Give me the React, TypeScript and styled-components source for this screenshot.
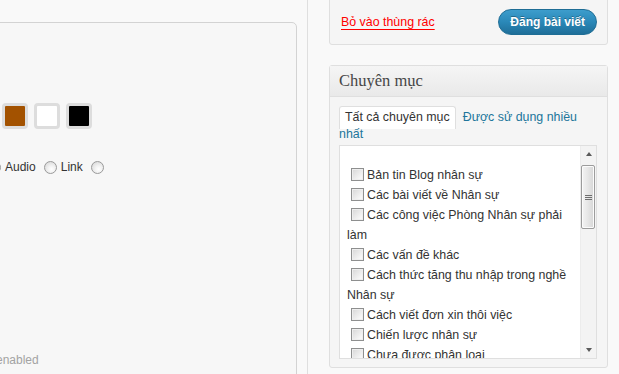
import styled, { createGlobalStyle } from 'styled-components'

const GlobalStyle = createGlobalStyle`
  html, body, #root {
    margin: 0;
    padding: 0;
    height: 100%;
  }
  body {
    background: #f9f9f9;
    font-family: "Liberation Sans", Arial, sans-serif;
    color: #333;
    overflow: hidden;
  }
`

const swatches = ['#a35200', '#ffffff', '#000000']

const categories = [
  'Bản tin Blog nhân sự',
  'Các bài viết về Nhân sự',
  'Các công việc Phòng Nhân sự phải làm',
  'Các vấn đề khác',
  'Cách thức tăng thu nhập trong nghề Nhân sự',
  'Cách viết đơn xin thôi việc',
  'Chiến lược nhân sự',
  'Chưa được phân loại',
]

const App = () => {
  return <>
    <GlobalStyle />
    <Page>
      <MainColumn>
        <EditorPanel>
          <SwatchRow>
            {swatches.map(c => <Swatch key={c} $color={c} />)}
          </SwatchRow>

          <FormatRow>
            <Radio type="radio" name="format" />
            <FormatLabel>Audio</FormatLabel>
            <Radio type="radio" name="format" />
            <FormatLabel>Link</FormatLabel>
            <Radio type="radio" name="format" />
          </FormatRow>

          <StatusNote>enabled</StatusNote>
        </EditorPanel>
      </MainColumn>

      <SideColumn>
        <PublishBox>
          <TrashLink href="#">Bỏ vào thùng rác</TrashLink>
          <PublishButton>Đăng bài viết</PublishButton>
        </PublishBox>

        <MetaBox>
          <BoxTitle>Chuyên mục</BoxTitle>
          <BoxInside>
            <TabLine>
              <Tab $active>Tất cả chuyên mục</Tab>
              <Tab>Được sử dụng nhiều nhất</Tab>
            </TabLine>

            <TabsPanel>
              <CheckList>
                {categories.map(name => (
                  <li key={name}>
                    <label>
                      <Check type="checkbox" />
                      {name}
                    </label>
                  </li>
                ))}
              </CheckList>

              <ScrollTrack>
                <ScrollButton><Arrow $dir="up" /></ScrollButton>
                <ScrollThumb><Grip /></ScrollThumb>
                <ScrollButton><Arrow $dir="down" /></ScrollButton>
              </ScrollTrack>
            </TabsPanel>
          </BoxInside>
        </MetaBox>
      </SideColumn>
    </Page>
  </>
}

const Page = styled.div`
  display: flex;
  height: 374px;
  overflow: hidden;
`

const MainColumn = styled.div`
  width: 308px;
  flex-shrink: 0;
  box-sizing: border-box;
  padding-top: 22px;
  border-right: 1px solid #dfdfdf;
`

const EditorPanel = styled.div`
  height: 380px;
  margin: 0 10px 0 -40px;
  padding-left: 40px;
  box-sizing: border-box;
  border: 1px solid #d3d3d3;
  border-radius: 5px;
  background: #f7f7f7;
  font-size: 12px;
`

const SwatchRow = styled.div`
  display: flex;
  gap: 6px;
  margin: 80px 0 0 1px;
`

const Swatch = styled.span<{ $color: string }>`
  width: 26px;
  height: 26px;
  box-sizing: border-box;
  border: 3px solid #dddddd;
  border-radius: 4px;
  background: ${p => p.$color};
`

const FormatRow = styled.div`
  display: flex;
  align-items: center;
  height: 16px;
  margin: 30px 0 0 -13px;
  line-height: 16px;
  color: #333;
`

const Radio = styled.input`
  appearance: none;
  width: 13px;
  height: 13px;
  margin: 0 4px 0 8px;
  box-sizing: border-box;
  border: 1px solid #9a9a9a;
  border-radius: 50%;
  background: radial-gradient(circle at 60% 65%, #ffffff 0, #f2f2f2 35%, #d2d2d2 100%);

  &:first-child {
    margin-left: 0;
  }
`

const FormatLabel = styled.span`
  white-space: nowrap;
`

const StatusNote = styled.div`
  margin: 177px 0 0 -5px;
  line-height: 16px;
  color: #a3a3a3;
`

const SideColumn = styled.div`
  flex: 1;
  box-sizing: border-box;
  padding: 0 11px 0 21px;
`

const PublishBox = styled.div`
  display: flex;
  align-items: center;
  justify-content: space-between;
  margin-top: -20px;
  padding: 28px 10px 9px 11px;
  border: 1px solid #dfdfdf;
  border-radius: 3px;
  background: #f5f5f5;
`

const TrashLink = styled.a`
  font-size: 12.4px;
  line-height: 16px;
  color: #ff0000;
  text-decoration: underline;
  text-underline-offset: 3px;
`

const PublishButton = styled.button`
  height: 26px;
  padding: 0 11px;
  border: 1px solid #1e6d95;
  border-radius: 13px;
  background: linear-gradient(#3d9dcc 0%, #2a88b8 50%, #1f6e98 100%);
  color: #fff;
  font-family: "Liberation Sans", Arial, sans-serif;
  font-size: 12px;
  font-weight: bold;
  text-shadow: 0 -1px 0 rgba(0, 0, 0, 0.3);
  cursor: pointer;
`

const MetaBox = styled.div`
  margin-top: 20px;
  border: 1px solid #dfdfdf;
  border-radius: 3px;
  background: #f5f5f5;
`

const BoxTitle = styled.h3`
  margin: 0;
  height: 30px;
  padding: 0 9px;
  border-bottom: 1px solid #dfdfdf;
  background: linear-gradient(#f5f5f5, #e9e9e9);
  font-family: "Liberation Serif", "Times New Roman", serif;
  font-size: 16.5px;
  font-weight: normal;
  line-height: 30px;
  color: #464646;
`

const BoxInside = styled.div`
  padding: 12px 10px 8px 9px;
`

const TabLine = styled.p`
  margin: 0;
  font-size: 12.4px;
  line-height: 17px;
`

const Tab = styled.span<{ $active?: boolean }>`
  padding: 3px 5px 5px ${p => p.$active ? '5px' : '6px'};
  border: 1px solid ${p => p.$active ? '#dfdfdf' : 'transparent'};
  border-bottom: none;
  border-radius: 3px 3px 0 0;
  background: ${p => p.$active ? '#fff' : 'transparent'};
  color: ${p => p.$active ? '#333' : '#21759b'};
`

const TabsPanel = styled.div`
  display: flex;
  height: 214px;
  margin-top: 2px;
  box-sizing: border-box;
  border: 1px solid #dfdfdf;
  background: #fff;
`

const CheckList = styled.ul`
  flex: 1;
  margin: 0;
  padding: 19px 4px 0 7px;
  list-style: none;
  overflow: hidden;
  font-size: 12.4px;
  line-height: 20px;
  color: #333;

  li {
    margin: 0;
  }
`

const Check = styled.input`
  appearance: none;
  width: 13px;
  height: 13px;
  margin: 0 3px 0 4px;
  vertical-align: -2px;
  box-sizing: border-box;
  border: 1px solid #8e8f8f;
  background: linear-gradient(135deg, #d6d6d6, #f7f7f7 80%);
  box-shadow: inset 0 0 0 1px #eeeeee;
`

const ScrollTrack = styled.div`
  display: flex;
  flex-direction: column;
  justify-content: space-between;
  width: 16px;
  flex-shrink: 0;
  background: #f3f3f3;
  border-left: 1px solid #ececec;
  box-sizing: border-box;
`

const ScrollButton = styled.div`
  display: flex;
  align-items: center;
  justify-content: center;
  height: 16px;
`

const Arrow = styled.span<{ $dir: 'up' | 'down' }>`
  width: 0;
  height: 0;
  border-left: 3.5px solid transparent;
  border-right: 3.5px solid transparent;
  ${p => p.$dir === 'up' ? 'border-bottom: 4px solid #5a5a5a;' : 'border-top: 4px solid #5a5a5a;'}
`

const ScrollThumb = styled.div`
  display: flex;
  align-items: center;
  justify-content: center;
  height: 64px;
  margin: 3px 1px 0 0;
  border: 1px solid #9c9c9c;
  border-radius: 2px;
  box-sizing: border-box;
  background: linear-gradient(to right, #f4f4f4, #e6e6e6 50%, #d6d6d6);
  box-shadow: inset 0 0 0 1px #fbfbfb;
  flex: none;
  margin-bottom: auto;
`

const Grip = styled.span`
  width: 7px;
  height: 5px;
  background: repeating-linear-gradient(#6e6e6e 0 1px, transparent 1px 2px);
`

export default App
